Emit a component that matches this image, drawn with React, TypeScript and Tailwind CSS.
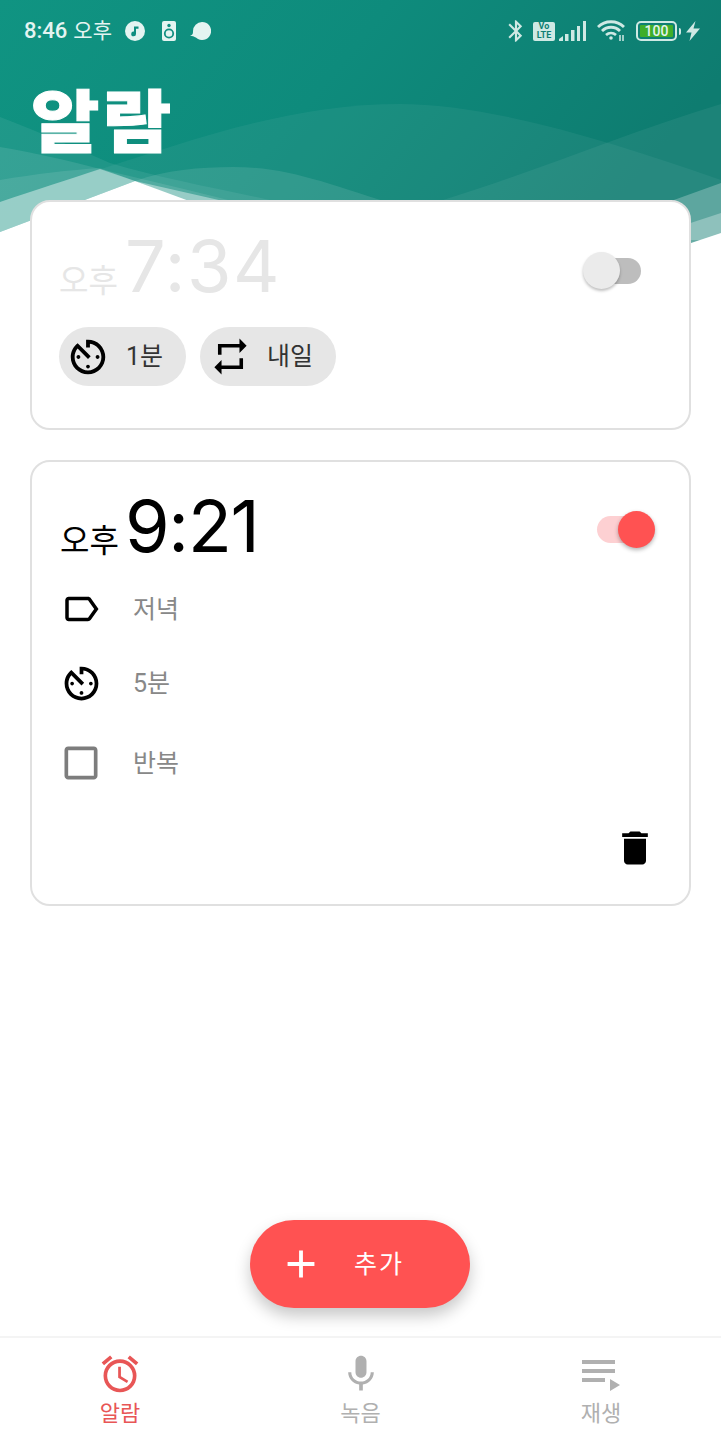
import { MdAccessAlarm, MdAdd, MdAvTimer, MdBluetooth, MdCheckBoxOutlineBlank, MdDelete, MdMic, MdOutlineLabel, MdRepeat } from "react-icons/md";

const HeaderWaves = () => (
  <svg className="absolute left-0 top-0" width="721" height="260" viewBox="0 0 721 260">
    <defs>
      <linearGradient id="bg" x1="0" y1="0" x2="1" y2="0.3">
        <stop offset="0" stopColor="#109482" />
        <stop offset="0.5" stopColor="#0e8b7c" />
        <stop offset="1" stopColor="#0e7c70" />
      </linearGradient>
    </defs>
    <rect width="721" height="260" fill="url(#bg)" />
    {/* curves that fall from the left */}
    <path d="M0 117C40 132 75 148 110 163C160 178 215 188 270 200L300 260H0Z" fill="#fff" fillOpacity="0.07" />
    <path d="M0 147C35 153 70 161 100 169C145 180 190 190 232 201V260H0Z" fill="#fff" fillOpacity="0.1" />
    <path d="M0 180C35 174 70 170 100 168L135 181L0 232Z" fill="#fff" fillOpacity="0.1" />
    {/* long hill across the header */}
    <path d="M0 202C60 182 110 166 170 147C250 122 320 104 400 104C490 104 610 141 721 180V260H0Z" fill="#fff" fillOpacity="0.05" />
    <path d="M0 232L135 181C165 170 200 167 233 167C290 167 330 185 400 206V260H0Z" fill="#fff" fillOpacity="0.1" />
    <path d="M721 104C620 135 540 170 443 200L480 260H721Z" fill="#fff" fillOpacity="0.06" />
    {/* brightest band over the white peak */}
    <path d="M0 202C35 190 70 179 100 169L135 181L232 203H190L135 181L0 232Z" fill="#fff" fillOpacity="0.4" />
    <path d="M721 183L660 205L640 240H721Z" fill="#fff" fillOpacity="0.25" />
    <path d="M721 213L660 233V245H721Z" fill="#fff" fillOpacity="0.3" />
    <path d="M0 232L135 181L200 205V260H0Z" fill="#fff" />
    <path d="M640 260L721 233V260Z" fill="#fff" />
  </svg>
);

const StatusLeft = () => (
  <div className="flex items-center text-[#e4f4f1]">
    <span className="text-[22px] font-medium leading-none">8:46</span>
    <span className="ml-[6px] text-[21px] leading-none">오후</span>
    <svg className="ml-[13px]" width="20" height="20" viewBox="0 0 20 20">
      <circle cx="10" cy="10" r="10" fill="#e4f4f1" />
      <path d="M9 5.500h4.500v2.200H11v5.200a2.400 2.400 0 1 1-2-2.300Z" fill="#0f8e80" />
    </svg>
    <svg className="ml-[17px]" width="14" height="20" viewBox="0 0 14 20">
      <rect width="14" height="20" rx="2" fill="#e4f4f1" />
      <circle cx="7" cy="4.500" r="1.700" fill="#0f8e80" />
      <circle cx="7" cy="12.500" r="4.200" fill="none" stroke="#0f8e80" strokeWidth="1.800" />
    </svg>
    <svg className="ml-[14px]" width="21" height="18" viewBox="0 0 21 18">
      <path d="M12 0a9 9 0 1 1-4 17C6 16 5 14 0 14c3-1 3-3 3-5a9 9 0 0 1 9-9Z" fill="#e4f4f1" />
    </svg>
  </div>
);

const StatusRight = () => (
  <div className="flex items-center text-[#cfe9e4]">
    <MdBluetooth size={26} className="-mx-[5px]" />
    <div className="ml-[9px] flex h-[19px] w-[22px] flex-col items-center justify-center rounded-[2px] bg-[#cfe9e4] text-[9px] font-bold leading-[9px] text-[#0e7f72]">
      <span>Vo</span>
      <span>LTE</span>
    </div>
    <svg className="ml-[4px]" width="27" height="20" viewBox="0 0 27 20">
      <path d="M0 20V18L4 15V20ZM6 20V13H9.500V20ZM12 20V9H15.500V20ZM18 20V5H21V20ZM24 20V0H27V20Z" fill="#cfe9e4" />
    </svg>
    <svg className="ml-[11px]" width="29" height="22" viewBox="0 0 29 22" fill="none" stroke="#cfe9e4" strokeWidth="2.800">
      <path d="M1 7C8 0 20 0 27 7" />
      <path d="M5 11C10 6 18 6 23 11" />
      <path d="M9 15C12 12.500 16 12.500 19 15" />
      <circle cx="14" cy="18" r="1.800" fill="#cfe9e4" stroke="none" />
      <path d="M23 15V21M26 15V21" strokeWidth="1.500" />
    </svg>
    <div className="ml-[10px] flex h-[20px] w-[41px] items-center rounded-[5px] border-2 border-[#cfe9e4] p-[2px]">
      <div className="flex h-full w-full items-center justify-center rounded-[1px] bg-[#3fae2a] text-[14px] font-medium leading-none text-[#e4f4f1]">100</div>
    </div>
    <div className="ml-[2px] h-[7px] w-[2px] rounded-r-full bg-[#cfe9e4]" />
    <svg className="ml-[5px]" width="14" height="20" viewBox="0 0 14 20">
      <path d="M9.500 0L0 11.500H5.500L3.500 20L14 7.500H7.500Z" fill="#cfe9e4" />
    </svg>
  </div>
);

const Chip = ({ icon, label, cls }: { icon: React.ReactNode; label: string; cls: string }) => (
  <div className={`flex h-[59px] items-center rounded-full bg-[#e6e6e6] text-[25px] text-[#333] ${cls}`}>
    {icon}
    <span>{label}</span>
  </div>
);

const Row = ({ icon, label, cls }: { icon: React.ReactNode; label: string; cls: string }) => (
  <div className={`flex items-center ${cls}`}>
    <div className="flex w-[42px] justify-center">{icon}</div>
    <span className="ml-[31px] text-[25px] leading-none text-[#888]">{label}</span>
  </div>
);

const NavItem = ({ icon, label, color }: { icon: React.ReactNode; label: string; color: string }) => (
  <div className={`flex w-[240px] flex-col items-center ${color}`}>
    {icon}
    <span className="mt-[3px] text-[22px] leading-[30px]">{label}</span>
  </div>
);

const QueueIcon = () => (
  <svg width="44" height="44" viewBox="0 0 44 44" fill="currentColor">
    <path d="M3 8H36V12H3ZM3 17H36V21H3ZM3 26H26V30H3ZM31 27L41 33L31 39Z" />
  </svg>
);

export default function App() {
  return (
    <div className="relative flex h-[1440px] w-[721px] flex-col overflow-hidden bg-white font-['Roboto','Noto_Sans_CJK_KR',sans-serif]">
      <HeaderWaves />

      <div className="relative flex h-[62px] items-center justify-between pl-[24px] pr-[21px]">
        <StatusLeft />
        <StatusRight />
      </div>

      <div className="relative h-[138px] pl-[31px]">
        <h1 className="inline-block origin-left scale-x-[1.095] font-['Noto_Sans_CJK_KR',sans-serif] text-[68px] font-black leading-[111px] tracking-[3px] text-white [-webkit-text-stroke:1px_white]">알람</h1>
      </div>

      <section className="relative mx-[30px] h-[230px] rounded-[20px] border-2 border-[#e0e0e0] bg-white px-[27px] pt-[28px]">
        <div className="flex h-[72px] items-start justify-between">
          <div className="flex items-baseline text-[#e6e6e6]">
            <span className="text-[32px] leading-none">오후</span>
            <span className="ml-[7px] font-['Inter',sans-serif] text-[72px] font-normal leading-none tracking-[1.500px]">7:34</span>
          </div>
          <div className="relative mr-[21px] mt-[28px] h-[26px] w-[41px] rounded-full bg-[#bdbdbd]">
            <div className="absolute -left-[17px] -top-[6px] h-[37px] w-[37px] rounded-full bg-[#ebebeb] shadow-[0_2px_3px_rgba(0,0,0,0.25)]" />
          </div>
        </div>
        <div className="mt-[25px] flex gap-[14px]">
          <Chip cls="w-[127px] pl-[6px]" icon={<MdAvTimer size={46} className="mr-[15px] text-black" />} label="1분" />
          <Chip cls="w-[136px] pl-[9px]" icon={<MdRepeat size={43} className="mr-[15px] text-black" />} label="내일" />
        </div>
      </section>

      <section className="relative mx-[30px] mt-[30px] h-[446px] rounded-[20px] border-2 border-[#e0e0e0] bg-white pl-[28px] pt-[28px]">
        <div className="flex h-[72px] items-start justify-between">
          <div className="flex items-baseline text-black">
            <span className="text-[32px] leading-none">오후</span>
            <span className="ml-[6px] font-['Inter',sans-serif] text-[72px] font-normal leading-none tracking-[-1.200px]">9:21</span>
          </div>
          <div className="relative mr-[47px] mt-[26px] h-[27px] w-[45px] rounded-full bg-[#fdd0d2]">
            <div className="absolute -right-[13px] -top-[5px] h-[37px] w-[37px] rounded-full bg-[#ff5252] shadow-[0_2px_4px_rgba(0,0,0,0.3)]" />
          </div>
        </div>
        <Row cls="mt-[27px] h-[40px]" icon={<MdOutlineLabel size={42} className="text-black" />} label="저녁" />
        <Row cls="mt-[34px] h-[40px]" icon={<MdAvTimer size={45} className="shrink-0 text-black" />} label="5분" />
        <Row cls="mt-[40px] h-[40px]" icon={<MdCheckBoxOutlineBlank size={44} className="shrink-0 text-[#7d7d7d]" />} label="반복" />
        <div className="mt-[43px] flex justify-end pr-[32px]">
          <MdDelete size={44} className="text-black" />
        </div>
      </section>

      <div className="relative flex flex-1 items-end justify-center pb-[28px] pr-[1px]">
        <button className="flex h-[88px] w-[220px] items-center rounded-full bg-[#ff5252] pl-[28px] text-white shadow-[0_8px_16px_rgba(0,0,0,0.22)]">
          <MdAdd size={46} />
          <span className="ml-[30px] text-[25px] leading-none tracking-[2px]">추가</span>
        </button>
      </div>

      <nav className="flex h-[104px] items-start justify-between border-t-2 border-[#f4f4f4] pt-[14px]">
        <NavItem color="text-[#e85656]" icon={<MdAccessAlarm size={44} />} label="알람" />
        <NavItem color="text-[#b0b0b0]" icon={<MdMic size={44} />} label="녹음" />
        <NavItem color="text-[#b0b0b0]" icon={<QueueIcon />} label="재생" />
      </nav>
    </div>
  );
}
